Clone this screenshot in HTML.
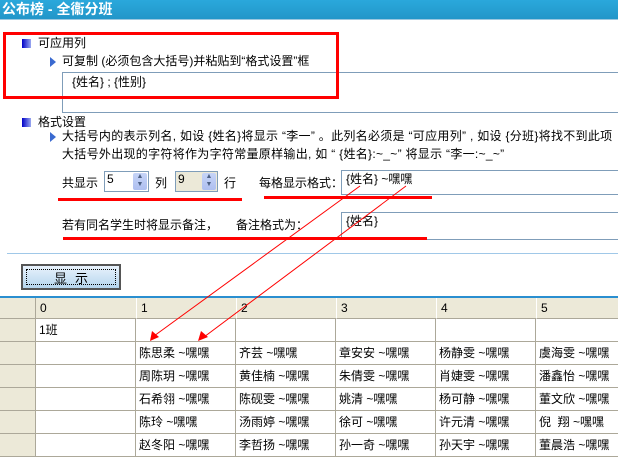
<!DOCTYPE html>
<html><head><meta charset="utf-8"><style>
*{margin:0;padding:0;box-sizing:border-box}
body{width:618px;height:457px;overflow:hidden;background:#fff;position:relative;font-family:"Liberation Sans","Noto Sans CJK SC","WenQuanYi Zen Hei",sans-serif;font-size:12px;color:#000}
.a{position:absolute;white-space:nowrap;line-height:14px}
.title{position:absolute;left:0;top:0;width:618px;height:20px;background:linear-gradient(#2aa8dc,#2296c9);border-bottom:1px solid #9cc8e0;color:#fff;font-weight:bold;font-size:14px;line-height:19px;padding-left:2px}
.sq{position:absolute;width:9px;height:9px;background:linear-gradient(90deg,#0000c8,#9aa8f0)}
.tri{position:absolute;width:0;height:0;border-top:5px solid transparent;border-bottom:5px solid transparent;border-left:6px solid #3a6ad0}
.box{position:absolute;border:1px solid #7f9db9;background:#fff}
.red{position:absolute;background:#f00}
.spin{position:absolute;border:1px solid #7f9db9;height:21px;background:#fff}
.sb{position:absolute;right:1px;top:1px;width:14px;height:17px;background:linear-gradient(#c6d4f7,#aebff0);border-radius:2px;font-size:7px;color:#4d6185;text-align:center;line-height:8px}
.grid{position:absolute;left:0;top:296px;width:618px;height:161px;border-top:2px solid #2a8fd0}
.hc{position:absolute;top:0;height:21px;background:#ece9d8;border-bottom:1px solid #aca899;padding-left:4px;line-height:20px}
.c{position:absolute;height:23px;border-right:1px solid #aca899;border-bottom:1px solid #aca899;line-height:22px;padding-left:3px;font-size:12px}
.rh{position:absolute;left:0;width:36px;height:23px;background:#ece9d8;border-bottom:1px solid #aca899;border-right:1px solid #aca899}
</style></head><body>
<div class="title">公布榜 - 全衞分班</div>

<div class="box" style="left:62px;top:72px;width:560px;height:41px"></div>
<div class="a" style="left:72px;top:75px">{姓名} ; {性别}</div>
<div style="position:absolute;left:3px;top:32px;width:336px;height:67px;border:3px solid #f00"></div>
<div class="sq" style="left:22px;top:39px"></div>
<div class="a" style="left:38px;top:36px">可应用列</div>
<div class="tri" style="left:50px;top:57px"></div>
<div class="a" style="left:62px;top:54px">可复制 (必须包含大括号)并粘贴到“格式设置”框</div>

<div class="sq" style="left:22px;top:118px"></div>
<div class="a" style="left:38px;top:115px">格式设置</div>
<div class="tri" style="left:50px;top:132px"></div>
<div class="a" style="left:62px;top:129px;letter-spacing:0.3px">大括号内的表示列名, 如设 {姓名}将显示 “李一” 。此列名必须是 “可应用列” , 如设 {分班}将找不到此项</div>
<div class="a" style="left:62px;top:147px;letter-spacing:0.3px">大括号外出现的字符将作为字符常量原样输出, 如 “ {姓名}:~_~” 将显示 “李一:~_~”</div>

<div class="a" style="left:62px;top:176px">共显示</div>
<div class="spin" style="left:104px;top:171px;width:45px"><span style="padding-left:2px">5</span><div class="sb">▲<br>▼</div></div>
<div class="a" style="left:155px;top:176px">列</div>
<div class="spin" style="left:175px;top:171px;width:43px;background:#ece9d8"><span style="padding-left:2px">9</span><div class="sb">▲<br>▼</div></div>
<div class="a" style="left:224px;top:176px">行</div>
<div class="red" style="left:58px;top:198px;width:184px;height:3px"></div>
<div class="a" style="left:259px;top:176px">每格显示格式：</div>
<div class="box" style="left:341px;top:170px;width:280px;height:25px"></div>
<div class="a" style="left:346px;top:172px">{姓名} ~嘿嘿</div>
<div class="red" style="left:264px;top:196px;width:168px;height:3px"></div>

<div class="a" style="left:62px;top:218px">若有同名学生时将显示备注，</div>
<div class="a" style="left:236px;top:218px">备注格式为：</div>
<div class="box" style="left:341px;top:212px;width:280px;height:28px"></div>
<div class="a" style="left:346px;top:214px">{姓名}</div>
<div class="red" style="left:63px;top:237px;width:364px;height:3px"></div>
<div style="position:absolute;left:7px;top:253px;width:611px;height:1px;background:#a0c8e8"></div>

<div style="position:absolute;left:21px;top:264px;width:100px;height:26px;border:2px solid #555;background:linear-gradient(#e8f2fc,#b6d6ee)"><div style="position:absolute;left:3px;top:3px;right:3px;bottom:3px;border:1px dotted #000;text-align:center;line-height:17px;font-size:13px;letter-spacing:8px;padding-left:8px">显示</div></div>

<div class="grid">
<div class="hc" style="left:0;width:36px;border-right:1px solid #aca899;padding:0"></div>
<div class="hc" style="left:36px;width:100px">0</div>
<div class="hc" style="left:136px;width:100px;border-left:1px solid #fff">1</div>
<div class="hc" style="left:236px;width:100px;border-left:1px solid #fff">2</div>
<div class="hc" style="left:336px;width:100px;border-left:1px solid #fff">3</div>
<div class="hc" style="left:436px;width:100px;border-left:1px solid #fff">4</div>
<div class="hc" style="left:536px;width:82px;border-left:1px solid #fff">5</div>

<div class="rh" style="top:21px"></div><div class="rh" style="top:44px"></div><div class="rh" style="top:67px"></div><div class="rh" style="top:90px"></div><div class="rh" style="top:113px"></div><div class="rh" style="top:136px"></div>

<div class="c" style="left:36px;top:21px;width:100px">1班</div><div class="c" style="left:136px;top:21px;width:100px"></div><div class="c" style="left:236px;top:21px;width:100px"></div><div class="c" style="left:336px;top:21px;width:100px"></div><div class="c" style="left:436px;top:21px;width:100px"></div><div class="c" style="left:536px;top:21px;width:90px"></div>

<div class="c" style="left:36px;top:44px;width:100px"></div><div class="c" style="left:136px;top:44px;width:100px">陈思柔 ~嘿嘿</div><div class="c" style="left:236px;top:44px;width:100px">齐芸 ~嘿嘿</div><div class="c" style="left:336px;top:44px;width:100px">章安安 ~嘿嘿</div><div class="c" style="left:436px;top:44px;width:100px">杨静雯 ~嘿嘿</div><div class="c" style="left:536px;top:44px;width:90px">虞海雯 ~嘿嘿</div>

<div class="c" style="left:36px;top:67px;width:100px"></div><div class="c" style="left:136px;top:67px;width:100px">周陈玥 ~嘿嘿</div><div class="c" style="left:236px;top:67px;width:100px">黄佳楠 ~嘿嘿</div><div class="c" style="left:336px;top:67px;width:100px">朱倩雯 ~嘿嘿</div><div class="c" style="left:436px;top:67px;width:100px">肖婕雯 ~嘿嘿</div><div class="c" style="left:536px;top:67px;width:90px">潘鑫怡 ~嘿嘿</div>

<div class="c" style="left:36px;top:90px;width:100px"></div><div class="c" style="left:136px;top:90px;width:100px">石希翎 ~嘿嘿</div><div class="c" style="left:236px;top:90px;width:100px">陈砚雯 ~嘿嘿</div><div class="c" style="left:336px;top:90px;width:100px">姚清 ~嘿嘿</div><div class="c" style="left:436px;top:90px;width:100px">杨可静 ~嘿嘿</div><div class="c" style="left:536px;top:90px;width:90px">董文欣 ~嘿嘿</div>

<div class="c" style="left:36px;top:113px;width:100px"></div><div class="c" style="left:136px;top:113px;width:100px">陈玲 ~嘿嘿</div><div class="c" style="left:236px;top:113px;width:100px">汤雨婷 ~嘿嘿</div><div class="c" style="left:336px;top:113px;width:100px">徐可 ~嘿嘿</div><div class="c" style="left:436px;top:113px;width:100px">许元清 ~嘿嘿</div><div class="c" style="left:536px;top:113px;width:90px">倪&nbsp;&nbsp;翔 ~嘿嘿</div>

<div class="c" style="left:36px;top:136px;width:100px"></div><div class="c" style="left:136px;top:136px;width:100px">赵冬阳 ~嘿嘿</div><div class="c" style="left:236px;top:136px;width:100px">李哲扬 ~嘿嘿</div><div class="c" style="left:336px;top:136px;width:100px">孙一奇 ~嘿嘿</div><div class="c" style="left:436px;top:136px;width:100px">孙天宇 ~嘿嘿</div><div class="c" style="left:536px;top:136px;width:90px">董晨浩 ~嘿嘿</div>
</div>

<svg style="position:absolute;left:0;top:0" width="618" height="457">
<line x1="360" y1="186" x2="154" y2="336" stroke="#f00" stroke-width="1"/>
<line x1="406" y1="186" x2="204" y2="337" stroke="#f00" stroke-width="1"/>
<polygon points="150,341 152,331 159,337" fill="#f00"/>
<polygon points="198,341 201,331 208,337" fill="#f00"/>
</svg>
</body></html>
